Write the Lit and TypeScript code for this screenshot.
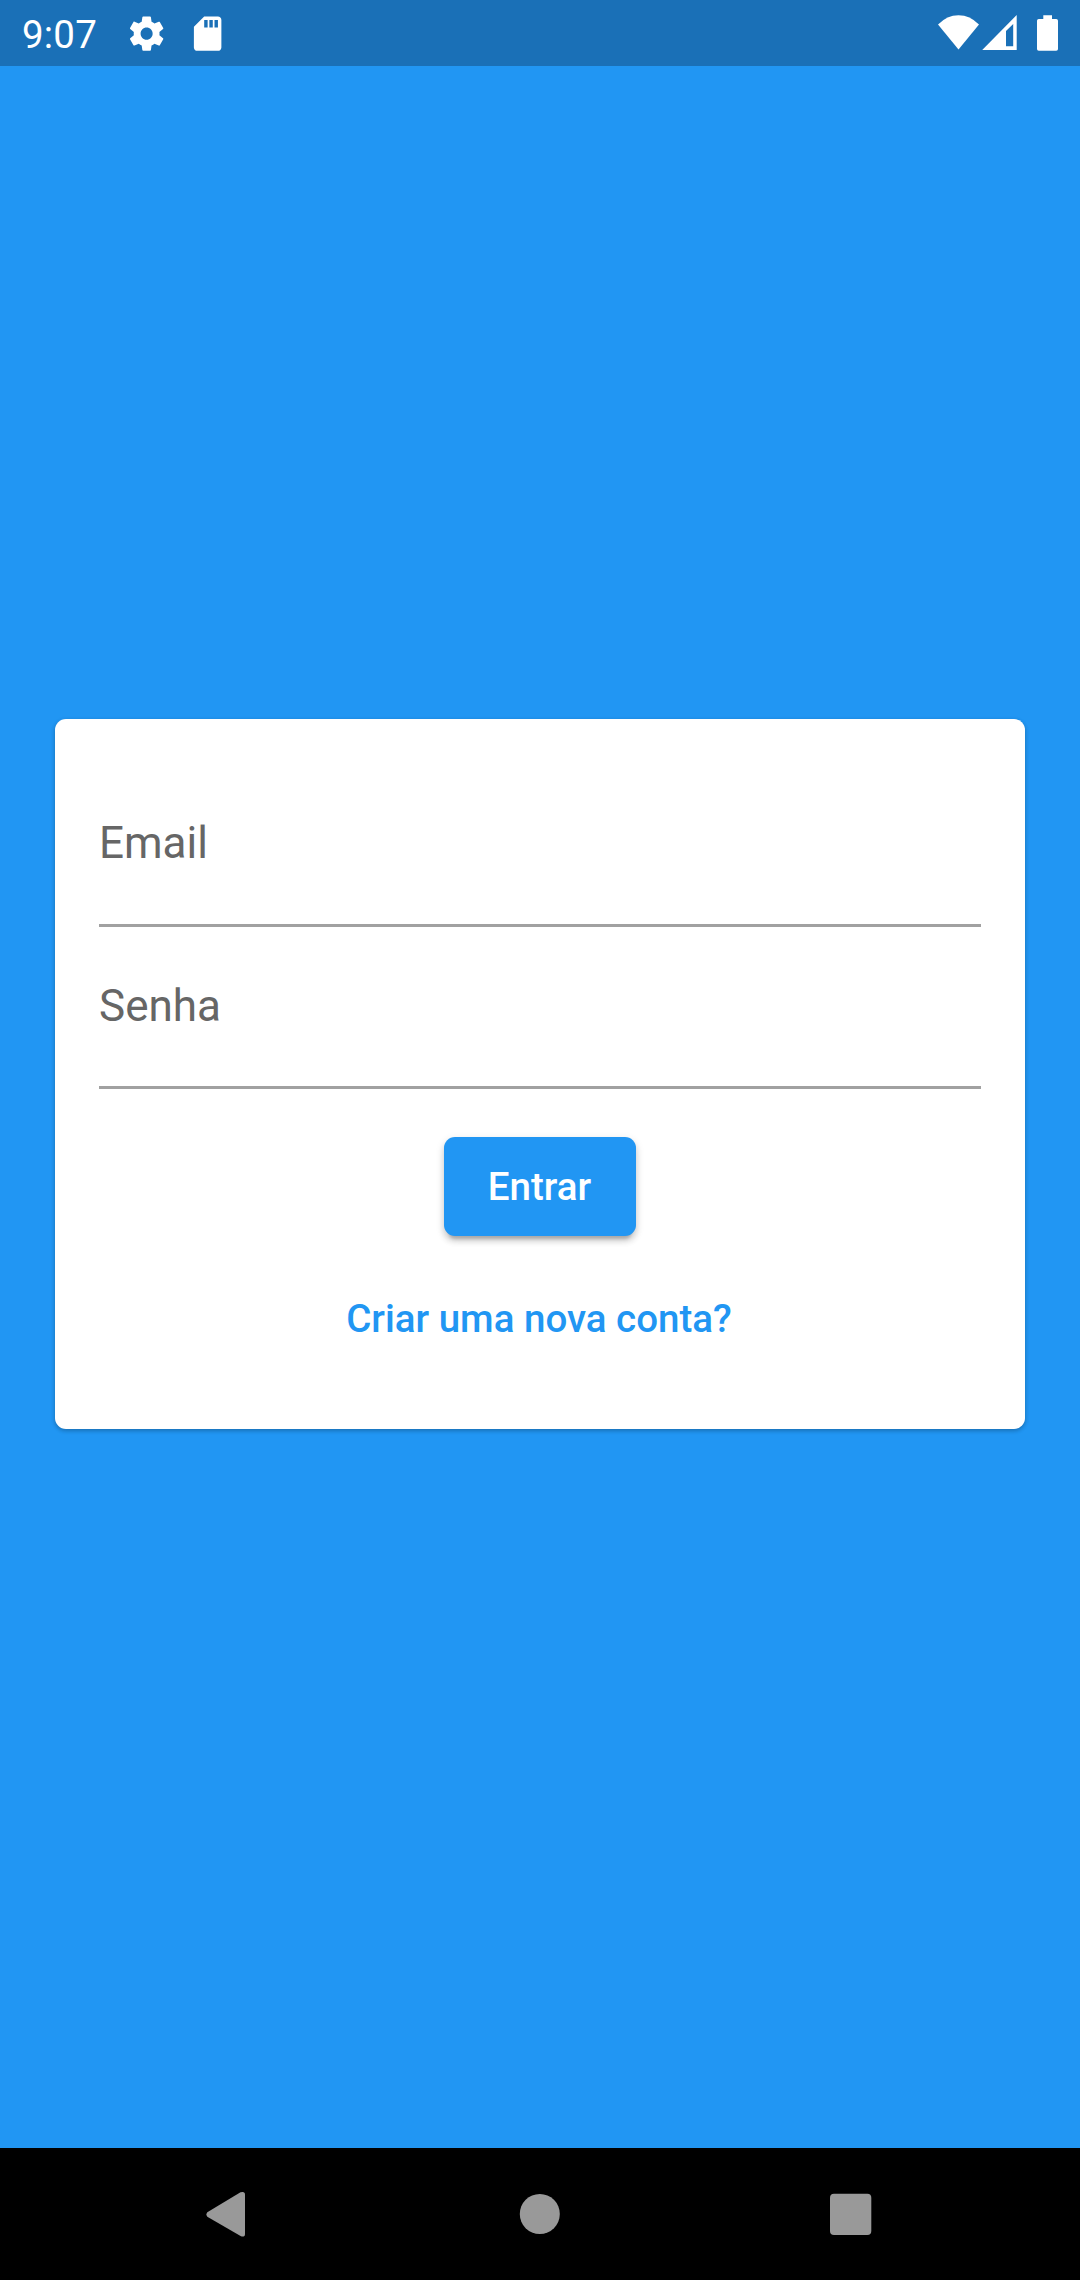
import { LitElement, html, css } from "lit";
import { customElement, property } from "lit/decorators.js";

@customElement("status-bar")
class StatusBar extends LitElement {
  static styles = css`
    :host {
      display: flex;
      align-items: center;
      height: 66px;
      box-sizing: border-box;
      padding: 0 22px;
      background: #1a70b7;
      color: #fff;
      font: 400 38.5px/45px Roboto, sans-serif;
    }
    svg {
      display: block;
      fill: currentColor;
      flex: none;
    }
    .time {
      margin-top: 2px;
      letter-spacing: 0.2px;
    }
    .gear {
      margin-left: 28.5px;
      margin-top: 1px;
    }
    .card {
      margin-left: 19.75px;
      margin-top: 1px;
    }
    .signals {
      margin-left: auto;
    }
  `;

  render() {
    return html`
      <span class="time">9:07</span>
      <svg class="gear" width="41.25" height="41.25" viewBox="0 0 24 24">
        <path d="M19.43 12.98c.04-.32.07-.64.07-.98s-.03-.66-.07-.98l2.11-1.65c.19-.15.24-.42.12-.64l-2-3.46c-.12-.22-.39-.3-.61-.22l-2.49 1c-.52-.4-1.08-.73-1.69-.98l-.38-2.65C14.46 2.18 14.25 2 14 2h-4c-.25 0-.46.18-.49.42l-.38 2.65c-.61.25-1.17.59-1.69.98l-2.49-1c-.23-.09-.49 0-.61.22l-2 3.46c-.13.22-.07.49.12.64l2.11 1.65c-.04.32-.07.65-.07.98s.03.66.07.98l-2.11 1.65c-.19.15-.24.42-.12.64l2 3.46c.12.22.39.3.61.22l2.49-1c.52.4 1.08.73 1.69.98l.38 2.65c.03.24.24.42.49.42h4c.25 0 .46-.18.49-.42l.38-2.65c.61-.25 1.17-.59 1.69-.98l2.49 1c.23.09.49 0 .61-.22l2-3.46c.12-.22.07-.49-.12-.64l-2.11-1.65zM12 15.5c-1.93 0-3.5-1.57-3.5-3.5s1.57-3.5 3.5-3.5 3.5 1.57 3.5 3.5-1.57 3.5-3.5 3.5z"/>
      </svg>
      <svg class="card" width="41.25" height="41.25" viewBox="0 0 24 24">
        <path d="M18 2h-8L4.02 8 4 20c0 1.1.9 2 2 2h12c1.1 0 2-.9 2-2V4c0-1.1-.9-2-2-2zm-6 6.500h-2V4h2v4.500zm3 0h-2V4h2v4.500zm3 0h-2V4h2v4.500z"/>
      </svg>
      <svg class="signals" width="120" height="66" viewBox="0 0 120 66">
        <path d="M20.5 49.5L0 24.5Q9 15.200 20.5 15.200T41 24.5z"/>
        <path fill-rule="evenodd" d="M44.200 50L78.700 15v35zM68 31v15.300h7.200V24z"/>
        <path d="M105.300 15.300h8.700v3.700h4.200q1.800 0 1.800 1.800v28.200q0 1.800-1.800 1.800h-17.400q-1.800 0-1.800-1.800V20.800q0-1.800 1.800-1.800h4.500z"/>
      </svg>
    `;
  }
}

@customElement("text-field")
class TextField extends LitElement {
  @property() label = "";
  @property() type = "text";

  static styles = css`
    :host {
      display: block;
      height: 162px;
      box-sizing: border-box;
      padding-top: 22px;
    }
    input {
      display: block;
      width: 100%;
      height: 140px;
      box-sizing: border-box;
      margin: 0;
      padding: 0 0 24px;
      border: 0;
      border-bottom: 3px solid #a1a1a1;
      border-radius: 0;
      outline: 0;
      background: none;
      font: 400 44px/52px Roboto, sans-serif;
      color: #212121;
    }
    :host(:first-child) input {
      padding-bottom: 26px;
    }
    input::placeholder {
      color: #666;
      opacity: 1;
    }
  `;

  render() {
    return html`<input type=${this.type} placeholder=${this.label} />`;
  }
}

@customElement("navigation-bar")
class NavigationBar extends LitElement {
  static styles = css`
    :host {
      display: flex;
      align-items: center;
      justify-content: space-between;
      height: 132px;
      box-sizing: border-box;
      padding: 0 208px 0 205px;
      background: #000;
    }
    svg {
      display: block;
      fill: #999;
    }
  `;

  render() {
    return html`
      <svg width="42" height="46" viewBox="0 0 42 46">
        <path d="M2.300 21.200L35.500 1.300Q40 -.2 40 3.700V42.900Q40 46.200 36 45.300L2.300 25.700Q.5 23.500 2.300 21.200z"/>
      </svg>
      <svg width="42" height="42" viewBox="0 0 42 42"><circle cx="21.8" cy="21" r="20"/></svg>
      <svg width="42" height="42" viewBox="0 0 42 42"><rect y=".7" width="41.300" height="41.300" rx="4"/></svg>
    `;
  }
}

@customElement("app-root")
class AppRoot extends LitElement {
  static styles = css`
    :host {
      display: flex;
      flex-direction: column;
      height: 2280px;
      background: #2196f3;
      font-family: Roboto, sans-serif;
    }
    main {
      flex: 1;
      padding: 653px 55px 0;
    }
    .panel {
      display: flex;
      flex-direction: column;
      height: 709.500px;
      box-sizing: border-box;
      padding: 46px 44px 0;
      border-radius: 11px;
      background: #fff;
      box-shadow: 0 2px 4px rgba(0, 0, 0, 0.2), 0 1px 5px rgba(0, 0, 0, 0.08);
    }
    button {
      align-self: center;
      height: 99px;
      margin: 0;
      border: 0;
      padding: 0 44.500px 0 43.500px;
      border-radius: 11px;
      font: 500 38.500px/45px Roboto, sans-serif;
    }
    .submit {
      width: 192.500px;
      margin-top: 48px;
      background: #2196f3;
      color: #fff;
      box-shadow: 0 8px 3px -5px rgba(0, 0, 0, 0.16), 0 5px 6px rgba(0, 0, 0, 0.14),
        0 3px 10px rgba(0, 0, 0, 0.12);
    }
    .link {
      margin-top: 33px;
      margin-right: 1px;
      background: none;
      color: #2196f3;
    }
  `;

  render() {
    return html`
      <status-bar></status-bar>
      <main>
        <section class="panel">
          <text-field label="Email"></text-field>
          <text-field label="Senha" type="password"></text-field>
          <button class="submit">Entrar</button>
          <button class="link">Criar uma nova conta?</button>
        </section>
      </main>
      <navigation-bar></navigation-bar>
    `;
  }
}
